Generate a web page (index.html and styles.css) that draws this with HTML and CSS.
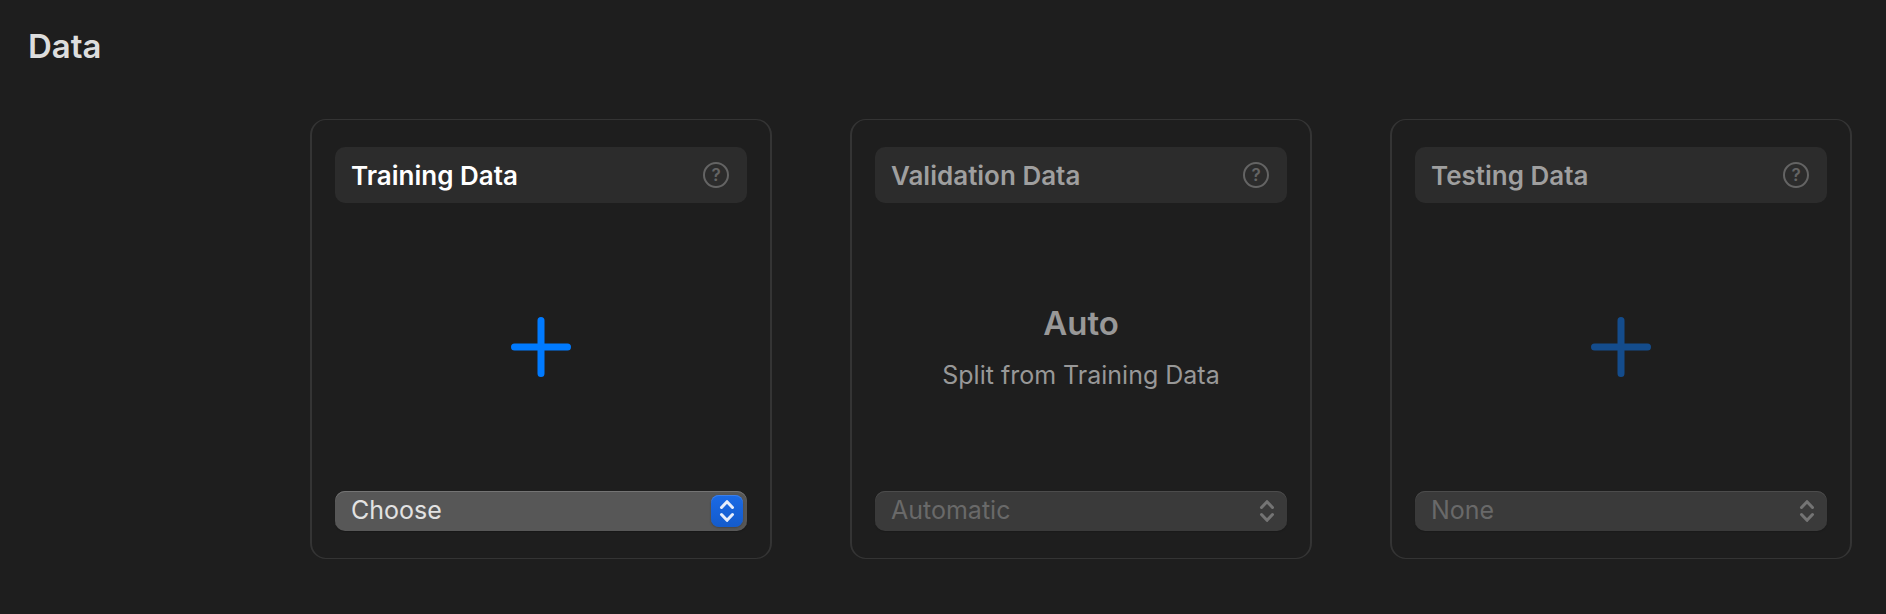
FILE: index.html
```html
<!DOCTYPE html>
<html lang="en">
<head>
    <meta charset="UTF-8">
    <meta name="viewport" content="width=device-width, initial-scale=1.0">
    <title>Data</title>
    <link rel="stylesheet" href="styles.css">
</head>
<body>
    <h1>Data</h1>
    <main class="cards">
        <section class="card active">
            <div class="card-header">
                <h2><label for="training-select">Training Data</label></h2>
                <button class="help">?</button>
            </div>
            <div class="card-body">
                <button class="add" aria-label="Add training data">
                    <svg width="60" height="60" viewBox="0 0 60 60">
                        <path d="M30 3.5V56.5M3.5 30H56.5"/>
                    </svg>
                </button>
            </div>
            <div class="dropdown">
                <select id="training-select">
                    <option>Choose</option>
                </select>
                <span class="arrows">
                    <svg width="32" height="32" viewBox="0 0 32 32">
                        <path d="M10.5 12.5L16 6.7L21.5 12.5M10.5 19.5L16 25.3L21.5 19.5"/>
                    </svg>
                </span>
            </div>
        </section>

        <section class="card">
            <div class="card-header">
                <h2><label for="validation-select">Validation Data</label></h2>
                <button class="help">?</button>
            </div>
            <div class="card-body">
                <p class="auto">Auto</p>
                <p class="split">Split from Training Data</p>
            </div>
            <div class="dropdown">
                <select id="validation-select" disabled>
                    <option>Automatic</option>
                </select>
                <span class="arrows">
                    <svg width="32" height="32" viewBox="0 0 32 32">
                        <path d="M10.5 12.5L16 6.7L21.5 12.5M10.5 19.5L16 25.3L21.5 19.5"/>
                    </svg>
                </span>
            </div>
        </section>

        <section class="card">
            <div class="card-header">
                <h2><label for="testing-select">Testing Data</label></h2>
                <button class="help">?</button>
            </div>
            <div class="card-body">
                <button class="add" aria-label="Add testing data" disabled>
                    <svg width="60" height="60" viewBox="0 0 60 60">
                        <path d="M30 3.5V56.5M3.5 30H56.5"/>
                    </svg>
                </button>
            </div>
            <div class="dropdown">
                <select id="testing-select" disabled>
                    <option>None</option>
                </select>
                <span class="arrows">
                    <svg width="32" height="32" viewBox="0 0 32 32">
                        <path d="M10.5 12.5L16 6.7L21.5 12.5M10.5 19.5L16 25.3L21.5 19.5"/>
                    </svg>
                </span>
            </div>
        </section>
    </main>
</body>
</html>
```
FILE: styles.css
```css
* {
    box-sizing: border-box;
}

body {
    font-family: Inter, "Liberation Sans", sans-serif;
    margin: 0;
    background-color: #1e1e1e;
    color: #989898;
}

h1, h2, p {
    margin: 0;
}

h1 {
    padding: 26px 28px 53px;
    font-size: 33px;
    line-height: 40px;
    font-weight: 600;
    color: #dddddd;
}

.cards {
    display: grid;
    grid-template-columns: repeat(3, 1fr);
    gap: 78px;
    padding: 0 34px 54px 310px;
}

.card {
    display: flex;
    flex-direction: column;
    padding: 27px 23px;
    border: solid #343434;
    border-width: 1px 2px;
    border-radius: 16px;
}

.card-header {
    display: flex;
    align-items: center;
    justify-content: space-between;
    height: 56px;
    padding: 0 18px 0 16px;
    background-color: #2c2c2c;
    border-radius: 10px;
}

h2 {
    padding-top: 2px;
    font-size: 26px;
    line-height: 32px;
    font-weight: 600;
    color: #9f9f9f;
}

.active h2 {
    color: white;
}

button {
    padding: 0;
    background: none;
    border: none;
    font-family: inherit;
}

.help {
    width: 26px;
    height: 26px;
    border: 2px solid #646464;
    border-radius: 50%;
    font-size: 17px;
    line-height: 22px;
    font-weight: 600;
    color: #646464;
}

.card-body {
    display: flex;
    flex-direction: column;
    align-items: center;
    justify-content: center;
    height: 288px;
}

.add {
    height: 60px;
    stroke: #007aff;
}

.add:disabled {
    stroke: #144c8c;
}

svg {
    display: block;
    fill: none;
}

.add path {
    stroke-width: 7;
    stroke-linecap: round;
}

.auto {
    font-size: 33px;
    line-height: 40px;
    font-weight: 600;
}

.split {
    margin-top: 16px;
    font-size: 25px;
    line-height: 32px;
}

.dropdown {
    position: relative;
}

select {
    display: block;
    width: 100%;
    height: 40px;
    padding: 0 48px 2px 16px;
    appearance: none;
    border: none;
    border-radius: 10px;
    background-color: #575757;
    box-shadow: inset 0 1px #747474, 0 1px 1px #181818;
    font-family: inherit;
    font-size: 25px;
    color: #e2e2e2;
}

select:disabled {
    background-color: #3a3a3a;
    box-shadow: inset 0 1px #4c4c4c, 0 1px 1px #1a1a1a;
    color: #696969;
    opacity: 1;
}

/* arrows sit over the right end of the select */
.arrows {
    position: absolute;
    top: 4px;
    right: 4px;
    border-radius: 8px;
    stroke: #747474;
    pointer-events: none;
}

.arrows path {
    stroke-width: 3;
    stroke-linecap: round;
    stroke-linejoin: round;
}

.active .arrows {
    background: linear-gradient(#1a6ae6, #145bcb);
    box-shadow: inset 0 1px #3e80e8, 0 1px 2px #444444;
    stroke: #e6edfb;
}
```
